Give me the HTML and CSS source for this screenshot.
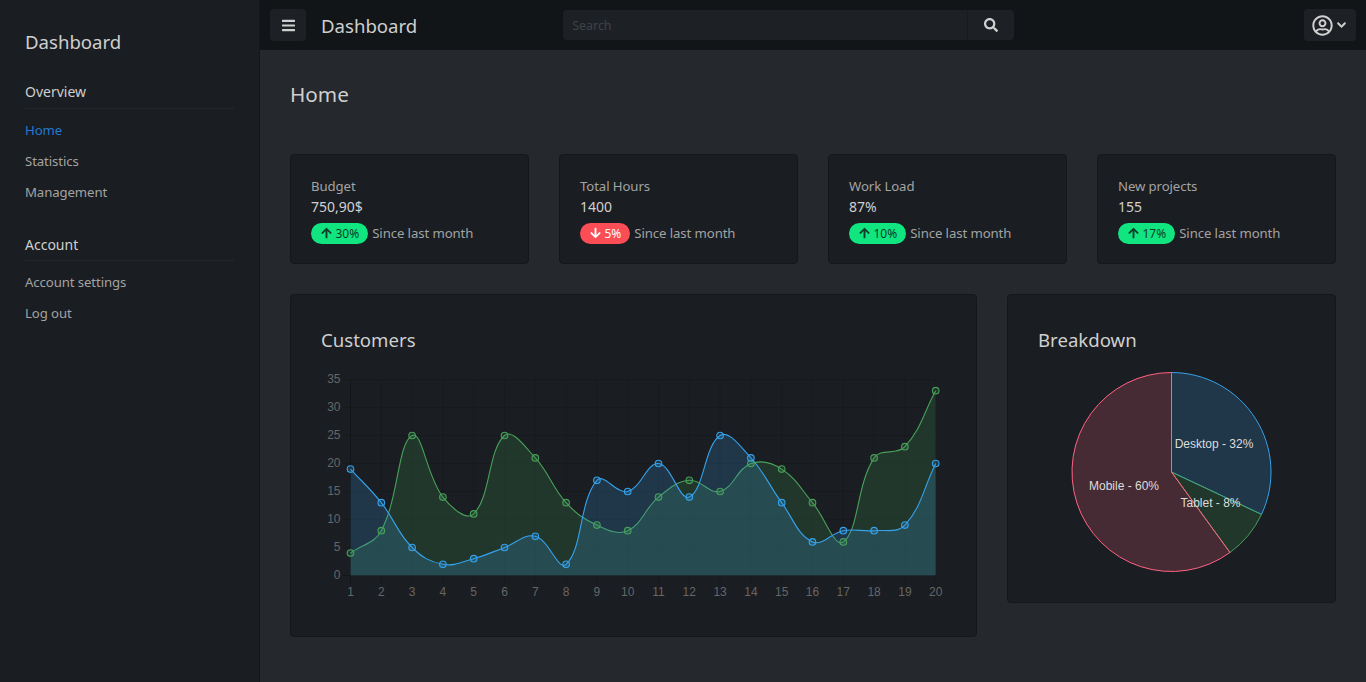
FILE: index.html
```html
<!DOCTYPE html>
<html lang="en">
<head>
    <meta charset="UTF-8">
    <meta name="viewport" content="width=device-width, initial-scale=1.0">
    <title>Dashboard</title>
    <link rel="stylesheet" href="styles.css">
</head>
<body>
    <aside class="sidebar">
        <h1 class="brand">Dashboard</h1>
        <h2 class="nav-title">Overview</h2>
        <nav class="nav-list">
            <a class="nav-link active" href="#">Home</a>
            <a class="nav-link" href="#">Statistics</a>
            <a class="nav-link" href="#">Management</a>
        </nav>
        <h2 class="nav-title nav-title-second">Account</h2>
        <nav class="nav-list">
            <a class="nav-link" href="#">Account settings</a>
            <a class="nav-link" href="#">Log out</a>
        </nav>
    </aside>
    <div class="content">
        <header class="topbar">
            <button class="icon-btn menu-btn" type="button" aria-label="Menu">
                <svg class="icon-bars" viewBox="0 0 448 512"><path d="M16 132h416c8.837 0 16-7.163 16-16V76c0-8.837-7.163-16-16-16H16C7.163 60 0 67.163 0 76v40c0 8.837 7.163 16 16 16zm0 160h416c8.837 0 16-7.163 16-16v-40c0-8.837-7.163-16-16-16H16c-8.837 0-16 7.163-16 16v40c0 8.837 7.163 16 16 16zm0 160h416c8.837 0 16-7.163 16-16v-40c0-8.837-7.163-16-16-16H16c-8.837 0-16 7.163-16 16v40c0 8.837 7.163 16 16 16z"/></svg>
            </button>
            <div class="topbar-title">Dashboard</div>
            <form class="search">
                <input class="search-input" type="text" placeholder="Search">
                <button class="search-btn" type="button" aria-label="Search">
                    <svg class="icon-search" viewBox="0 0 512 512"><path d="M505 442.7L405.3 343c-4.5-4.5-10.6-7-17-7H372c27.6-35.3 44-79.7 44-128C416 93.1 322.9 0 208 0S0 93.1 0 208s93.1 208 208 208c48.3 0 92.7-16.4 128-44v16.3c0 6.4 2.5 12.5 7 17l99.7 99.7c9.4 9.4 24.6 9.4 33.9 0l28.3-28.3c9.4-9.4 9.4-24.6.1-34zM208 336c-70.7 0-128-57.2-128-128 0-70.7 57.2-128 128-128 70.7 0 128 57.2 128 128 0 70.7-57.2 128-128 128z"/></svg>
                </button>
            </form>
            <button class="icon-btn user-btn" type="button" aria-label="Account">
                <svg class="icon-user" viewBox="0 0 496 512"><path d="M248 104c-53 0-96 43-96 96s43 96 96 96 96-43 96-96-43-96-96-96zm0 144c-26.5 0-48-21.5-48-48s21.5-48 48-48 48 21.5 48 48-21.5 48-48 48zm0-240C111 8 0 119 0 256s111 248 248 248 248-111 248-248S385 8 248 8zm0 448c-49.7 0-95.1-18.3-130.1-48.4 14.9-23 40.4-38.6 69.6-39.5 20.8 6.4 40.6 9.6 60.5 9.6s39.7-3.1 60.5-9.6c29.2 1 54.7 16.5 69.6 39.5-35 30.1-80.4 48.4-130.1 48.4zm162.7-84.1c-24.4-31.4-62.1-51.9-105.1-51.9-10.2 0-26 9.6-57.6 9.6-31.5 0-47.4-9.6-57.6-9.6-42.9 0-80.6 20.5-105.1 51.9C61.9 339.2 48 299.2 48 256c0-110.3 89.7-200 200-200s200 89.7 200 200c0 43.2-13.9 83.2-37.3 115.9z"/></svg>
                <svg class="icon-chevron" viewBox="0 0 448 512"><path d="M207.029 381.476L12.686 187.132c-9.373-9.373-9.373-24.569 0-33.941l22.667-22.667c9.357-9.357 24.522-9.375 33.901-.04L224 284.505l154.745-154.021c9.379-9.335 24.544-9.317 33.901.04l22.667 22.667c9.373 9.373 9.373 24.569 0 33.941L240.971 381.476c-9.373 9.372-24.569 9.372-33.942 0z"/></svg>
            </button>
        </header>
        <main class="main">
            <h2 class="page-title">Home</h2>
            <section class="stats">
                <div class="card stat">
                    <div class="stat-label">Budget</div>
                    <div class="stat-value">750,90$</div>
                    <div class="stat-foot">
                        <span class="pill pill-up"><svg class="icon-arrow" viewBox="0 0 448 512"><path d="M34.9 289.5l-22.2-22.2c-9.4-9.4-9.4-24.6 0-33.9L207 39c9.4-9.4 24.6-9.4 33.9 0l194.3 194.3c9.4 9.4 9.4 24.6 0 33.9L413 289.4c-9.5 9.5-25 9.3-34.3-.4L264 168.6V456c0 13.3-10.7 24-24 24h-32c-13.3 0-24-10.7-24-24V168.6L69.2 289.1c-9.3 9.8-24.8 10-34.3.4z"/></svg>30%</span>
                        <span class="stat-note">Since last month</span>
                    </div>
                </div>
                <div class="card stat">
                    <div class="stat-label">Total Hours</div>
                    <div class="stat-value">1400</div>
                    <div class="stat-foot">
                        <span class="pill pill-down"><svg class="icon-arrow" viewBox="0 0 448 512"><path d="M413.1 222.5l22.2 22.2c9.4 9.4 9.4 24.6 0 33.9L241 473c-9.4 9.4-24.6 9.4-33.9 0L12.7 278.6c-9.4-9.4-9.4-24.6 0-33.9l22.2-22.2c9.5-9.5 25-9.3 34.3.4L184 343.4V56c0-13.3 10.7-24 24-24h32c13.3 0 24 10.7 24 24v287.4l114.8-120.5c9.3-9.8 24.8-10 34.3-.4z"/></svg>5%</span>
                        <span class="stat-note">Since last month</span>
                    </div>
                </div>
                <div class="card stat">
                    <div class="stat-label">Work Load</div>
                    <div class="stat-value">87%</div>
                    <div class="stat-foot">
                        <span class="pill pill-up"><svg class="icon-arrow" viewBox="0 0 448 512"><path d="M34.9 289.5l-22.2-22.2c-9.4-9.4-9.4-24.6 0-33.9L207 39c9.4-9.4 24.6-9.4 33.9 0l194.3 194.3c9.4 9.4 9.4 24.6 0 33.9L413 289.4c-9.5 9.5-25 9.3-34.3-.4L264 168.6V456c0 13.3-10.7 24-24 24h-32c-13.3 0-24-10.7-24-24V168.6L69.2 289.1c-9.3 9.8-24.8 10-34.3.4z"/></svg>10%</span>
                        <span class="stat-note">Since last month</span>
                    </div>
                </div>
                <div class="card stat">
                    <div class="stat-label">New projects</div>
                    <div class="stat-value">155</div>
                    <div class="stat-foot">
                        <span class="pill pill-up"><svg class="icon-arrow" viewBox="0 0 448 512"><path d="M34.9 289.5l-22.2-22.2c-9.4-9.4-9.4-24.6 0-33.9L207 39c9.4-9.4 24.6-9.4 33.9 0l194.3 194.3c9.4 9.4 9.4 24.6 0 33.9L413 289.4c-9.5 9.5-25 9.3-34.3-.4L264 168.6V456c0 13.3-10.7 24-24 24h-32c-13.3 0-24-10.7-24-24V168.6L69.2 289.1c-9.3 9.8-24.8 10-34.3.4z"/></svg>17%</span>
                        <span class="stat-note">Since last month</span>
                    </div>
                </div>
            </section>
            <section class="charts">
                <div class="card chart-card line-card">
                    <h3 class="chart-title">Customers</h3>
                    <svg id="lineChart" class="line-chart" width="625" height="235" viewBox="0 0 625 235"></svg>
                </div>
                <div class="card chart-card pie-card">
                    <h3 class="chart-title">Breakdown</h3>
                    <svg id="pieChart" class="pie-chart" width="267" height="205" viewBox="0 0 267 205"></svg>
                </div>
            </section>
        </main>
    </div>
    <script src="charts.js"></script>
</body>
</html>
```

FILE: styles.css
```css
* {
    box-sizing: border-box;
}

html, body {
    height: 100%;
}

body {
    margin: 0;
    display: flex;
    overflow: hidden;
    background: #25282d;
    color: #d9d9d9;
    font-family: "Noto Sans", "Open Sans", sans-serif;
    font-size: 14px;
    line-height: 21px;
}

.sidebar {
    flex: 0 0 260px;
    padding: 0 25px;
    background: #1a1d21;
    border-right: 1px solid #15181c;
}

.brand {
    margin: 27px 0 0;
    font-size: 18.6px;
    font-weight: 400;
    line-height: 30px;
    color: #cfcfcf;
}

.nav-title {
    margin: 24px 0 0;
    padding-bottom: 5px;
    border-bottom: 1px solid #24272c;
    font-size: 14px;
    font-weight: 400;
    line-height: 22px;
    color: #cfcfcf;
}

.nav-title-second {
    margin-top: 31px;
    padding-bottom: 4px;
}

.nav-list {
    display: flex;
    flex-direction: column;
    gap: 10px;
    padding-top: 11px;
}

.nav-link {
    font-size: 13.2px;
    letter-spacing: -0.1px;
    color: #a3a3a3;
    text-decoration: none;
}

.nav-link.active {
    color: #2478d0;
}

.content {
    flex: 1;
    min-width: 0;
    display: flex;
    flex-direction: column;
}

.topbar {
    flex: 0 0 50px;
    display: flex;
    align-items: center;
    padding: 0 10px;
    background: #111518;
}

.icon-btn {
    display: flex;
    align-items: center;
    justify-content: center;
    height: 32px;
    padding: 0;
    border: 0;
    border-radius: 4px;
    background: #1d2125;
    color: #d0d0d0;
}

.menu-btn {
    width: 36px;
}

.user-btn {
    width: 52px;
    margin-left: auto;
    padding-right: 3px;
    gap: 4px;
}

.icon-bars,
.icon-search,
.icon-user,
.icon-chevron,
.icon-arrow {
    display: block;
    fill: currentColor;
}

.icon-bars {
    width: 13px;
    height: 15px;
}

.icon-search {
    width: 14px;
    height: 14px;
}

.icon-user {
    width: 21px;
    height: 21px;
}

.icon-chevron {
    width: 9px;
    height: 10px;
    stroke: currentColor;
    stroke-width: 30;
}

.topbar-title {
    margin-left: 15px;
    padding-top: 1px;
    font-size: 18.6px;
    color: #cfcfcf;
}

.search {
    display: flex;
    width: 451px;
    height: 30px;
    margin-left: 146px;
    border-radius: 4px;
    overflow: hidden;
    background: #1d2125;
}

.search-input {
    flex: 1;
    min-width: 0;
    padding: 0 9px;
    border: 0;
    outline: 0;
    background: transparent;
    font-family: inherit;
    font-size: 12.4px;
    color: #ccc;
}

.search-input::placeholder {
    color: #3f4347;
}

.search-btn {
    display: flex;
    align-items: center;
    justify-content: center;
    width: 47px;
    padding: 0 1px 0 0;
    border: 0;
    border-left: 1px solid #171a1e;
    background: transparent;
    color: #d0d0d0;
}

.main {
    flex: 1;
    padding: 30px;
}

.page-title {
    margin: 0;
    font-size: 20.7px;
    font-weight: 400;
    line-height: 29px;
    color: #cfcfcf;
}

.card {
    background: #1a1d21;
    border: 1px solid #15171b;
    border-radius: 4px;
}

.stats {
    display: grid;
    grid-template-columns: repeat(4, 1fr);
    gap: 30px;
    margin-top: 45px;
}

.stat {
    height: 110px;
    padding: 21px 20px 20px;
}

.stat-label {
    font-size: 13.2px;
    letter-spacing: -0.1px;
    color: #a3a3a3;
}

.stat-value {
    font-size: 14px;
    line-height: 19px;
    color: #d0d0d0;
}

.stat-foot {
    display: flex;
    align-items: center;
    gap: 4px;
    margin-top: 6px;
}

.stat-note {
    padding-top: 1px;
    font-size: 13.2px;
    letter-spacing: -0.1px;
    color: #a3a3a3;
}

.pill {
    display: flex;
    align-items: center;
    justify-content: center;
    gap: 4px;
    height: 21px;
    padding: 0 9px 0 9.5px;
    border-radius: 10.5px;
    font-size: 12px;
}

.pill-up {
    background: #10e580;
    color: #0d3d28;
}

.pill-down {
    background: #fb4d55;
    color: #fff;
}

.icon-arrow {
    width: 11px;
    height: 12px;
}

.charts {
    display: flex;
    align-items: flex-start;
    gap: 30px;
    margin-top: 30px;
}

.chart-card {
    padding: 30px;
}

.line-card {
    width: 687px;
    height: 343px;
}

.pie-card {
    width: 329px;
    height: 309px;
}

.chart-title {
    margin: 0;
    font-size: 18.6px;
    font-weight: 400;
    line-height: 29px;
    color: #cfcfcf;
}

.line-chart,
.pie-chart {
    display: block;
    margin-top: 16px;
}

.pie-chart {
    margin-top: 18px;
}

.chart-text {
    font-family: "Liberation Sans", Arial, sans-serif;
    font-size: 12px;
}

.axis-text {
    fill: #666;
}

.pie-text {
    fill: #dcdcdc;
}
```

FILE: charts.js
```js
// line chart: 20 days, two series
var blue = [19, 13, 5, 2, 3, 5, 7, 2, 17, 15, 20, 14, 25, 21, 13, 6, 8, 8, 9, 20];
var green = [4, 8, 25, 14, 11, 25, 21, 13, 9, 8, 14, 17, 15, 20, 19, 13, 6, 21, 23, 33];

var NS = 'http://www.w3.org/2000/svg';
var BLUE = '54,162,235', GREEN = '72,160,90', RED = '255,99,132';
var left = 29.5, stepX = 30.8, zeroY = 205.5, unitY = 5.6;

function add(svg, tag, attrs, text) {
    var el = document.createElementNS(NS, tag);
    for (var key in attrs) {
        el.setAttribute(key, attrs[key]);
    }
    if (text !== undefined) {
        el.textContent = text;
    }
    svg.appendChild(el);
    return el;
}

function toPoints(values) {
    return values.map(function (v, i) {
        return { x: left + i * stepX, y: zeroY - v * unitY };
    });
}

// same spline as chart.js uses with tension 0.4
function splinePath(pts) {
    var t = 0.4;
    var ctrl = pts.map(function (cur, i) {
        var prev = pts[i - 1] || cur;
        var next = pts[i + 1] || cur;
        var d01 = Math.hypot(cur.x - prev.x, cur.y - prev.y);
        var d12 = Math.hypot(next.x - cur.x, next.y - cur.y);
        var sum = d01 + d12;
        var fa = t * d01 / sum;
        var fb = t * d12 / sum;
        return {
            ax: cur.x - fa * (next.x - prev.x),
            ay: Math.min(zeroY, cur.y - fa * (next.y - prev.y)),
            bx: cur.x + fb * (next.x - prev.x),
            by: Math.min(zeroY, cur.y + fb * (next.y - prev.y))
        };
    });
    var d = 'M' + pts[0].x + ' ' + pts[0].y;
    for (var i = 1; i < pts.length; i++) {
        d += 'C' + ctrl[i - 1].bx + ' ' + ctrl[i - 1].by + ' ' + ctrl[i].ax + ' ' + ctrl[i].ay + ' ' + pts[i].x + ' ' + pts[i].y;
    }
    return d;
}

function drawSeries(svg, values, rgb) {
    var pts = toPoints(values);
    var d = splinePath(pts);
    var last = pts[pts.length - 1];
    add(svg, 'path', {
        d: d + 'L' + last.x + ' ' + zeroY + 'L' + pts[0].x + ' ' + zeroY + 'Z',
        fill: 'rgba(' + rgb + ',0.2)'
    });
    add(svg, 'path', { d: d, fill: 'none', stroke: 'rgb(' + rgb + ')', 'stroke-width': 1.1 });
    return pts;
}

function drawDots(svg, pts, rgb) {
    pts.forEach(function (p) {
        add(svg, 'circle', {
            cx: p.x, cy: p.y, r: 3.3,
            fill: 'rgba(' + rgb + ',0.2)',
            stroke: 'rgb(' + rgb + ')',
            'stroke-width': 1.1
        });
    });
}

function drawLineChart() {
    var svg = document.getElementById('lineChart');
    var grid = 'rgba(0,0,0,0.1)';
    var axis = 'rgba(0,0,0,0.25)';
    var right = left + 19 * stepX;
    for (var v = 0; v <= 35; v += 5) {
        var y = zeroY - v * unitY;
        add(svg, 'line', { x1: left - 8, x2: right, y1: y, y2: y, stroke: v === 0 ? axis : grid });
        add(svg, 'text', { x: left - 10, y: y + 3.5, 'text-anchor': 'end', 'class': 'chart-text axis-text' }, v);
    }
    for (var i = 0; i < 20; i++) {
        var x = left + i * stepX;
        add(svg, 'line', { x1: x, x2: x, y1: zeroY - 35 * unitY, y2: zeroY + 8, stroke: i === 0 ? axis : grid });
        add(svg, 'text', { x: x, y: zeroY + 20.5, 'text-anchor': 'middle', 'class': 'chart-text axis-text' }, i + 1);
    }
    var greenPts = drawSeries(svg, green, GREEN);
    var bluePts = drawSeries(svg, blue, BLUE);
    drawDots(svg, greenPts, GREEN);
    drawDots(svg, bluePts, BLUE);
}

function drawPieChart() {
    var svg = document.getElementById('pieChart');
    var cx = 133.5, cy = 100, r = 99.5;
    var slices = [
        { pct: 32, rgb: BLUE, label: 'Desktop - 32%', lx: 176, ly: 76 },
        { pct: 8, rgb: GREEN, label: 'Tablet - 8%', lx: 172.5, ly: 135 },
        { pct: 60, rgb: RED, label: 'Mobile - 60%', lx: 86, ly: 118 }
    ];
    var start = 0;
    slices.forEach(function (s) {
        var end = start + s.pct / 100 * Math.PI * 2;
        var x0 = cx + r * Math.sin(start), y0 = cy - r * Math.cos(start);
        var x1 = cx + r * Math.sin(end), y1 = cy - r * Math.cos(end);
        var large = s.pct > 50 ? 1 : 0;
        add(svg, 'path', {
            d: 'M' + cx + ' ' + cy + 'L' + x0 + ' ' + y0 + 'A' + r + ' ' + r + ' 0 ' + large + ' 1 ' + x1 + ' ' + y1 + 'Z',
            fill: 'rgba(' + s.rgb + ',0.2)',
            stroke: 'rgb(' + s.rgb + ')',
            'stroke-width': 1
        });
        start = end;
    });
    slices.forEach(function (s) {
        add(svg, 'text', { x: s.lx, y: s.ly, 'text-anchor': 'middle', 'class': 'chart-text pie-text' }, s.label);
    });
}

drawLineChart();
drawPieChart();
```
